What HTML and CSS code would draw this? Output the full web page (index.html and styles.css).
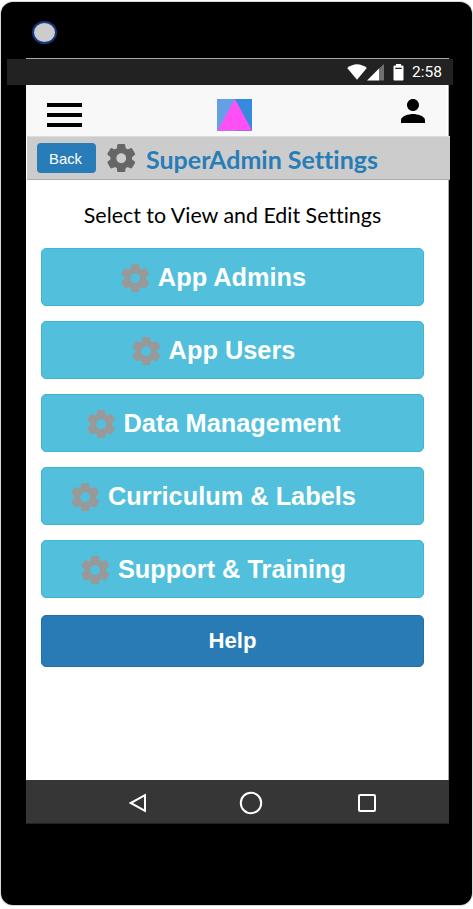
FILE: index.html
```html
<!DOCTYPE html>
<html lang="en">
<head>
<meta charset="utf-8">
<title>SuperAdmin Settings</title>
<link rel="stylesheet" href="styles.css">
</head>
<body>
<svg class="defs" width="0" height="0" aria-hidden="true">
  <symbol id="gear" viewBox="1.6 1.6 20.8 20.8"><path stroke-width=".8" stroke-linejoin="round" d="M19.43 12.98c.04-.32.07-.64.07-.98s-.03-.66-.07-.98l2.11-1.65c.19-.15.24-.42.12-.64l-2-3.46c-.12-.22-.39-.3-.61-.22l-2.49 1c-.52-.4-1.08-.73-1.69-.98l-.38-2.65C14.46 2.18 14.25 2 14 2h-4c-.25 0-.46.18-.49.42l-.38 2.65c-.61.25-1.17.59-1.69.98l-2.49-1c-.23-.09-.49 0-.61.22l-2 3.46c-.13.22-.07.49.12.64l2.11 1.65c-.04.32-.07.65-.07.98s.03.66.07.98l-2.11 1.65c-.19.15-.24.42-.12.64l2 3.46c.12.22.39.3.61.22l2.49-1c.52.4 1.08.73 1.69.98l.38 2.65c.03.24.24.42.49.42h4c.25 0 .46-.18.49-.42l.38-2.65c.61-.25 1.17-.59 1.69-.98l2.49 1c.23.09.49 0 .61-.22l2-3.46c.12-.22.07-.49-.12-.64l-2.11-1.65zM12 16a4 4 0 0 1 0-8a4 4 0 0 1 0 8z"/></symbol>
</svg>
<div class="device">
  <div class="bezel-top"><span class="camera"></span></div>
  <div class="status">
    <svg class="wifi" viewBox="0 0 20 16"><path d="M0.200 4Q10-3.500 19.800 4L10 15.800Z" fill="#fff"/></svg>
    <svg class="signal" viewBox="0 0 17 17"><path d="M0 16.500L12 4.500V16.500Z" fill="#fff"/><path d="M12 4.500L17 0V16.500H12Z" fill="#707070"/></svg>
    <svg class="battery" viewBox="0 0 11 17"><path d="M3 0H8V1.500H9.500Q10.500 1.500 10.500 2.500V15.500Q10.500 16.500 9.500 16.500H1.500Q.5 16.500 .5 15.500V2.500Q.5 1.500 1.500 1.500H3Z" fill="#fff"/><path d="M2.300 3.700H8.700V4.900H2.300Z" fill="#222"/></svg>
    <span class="clock">2:58</span>
  </div>
  <main class="screen">
    <header class="appbar">
      <div class="menu"><span></span><span></span><span></span></div>
      <svg class="logo" viewBox="0 0 35 32"><path d="M0 0H18V32H0Z" fill="#65a0e4"/><path d="M18 0H35V32H18Z" fill="#358ade"/><path d="M.5 31.500L18 0L35 31.500Z" fill="#ff50f5"/></svg>
      <svg class="person" viewBox="4 4 16 16"><path d="M12 12c2.210 0 4-1.790 4-4s-1.790-4-4-4-4 1.790-4 4 1.790 4 4 4zm0 2c-2.670 0-8 1.340-8 4v2h16v-2c0-2.660-5.330-4-8-4z"/></svg>
    </header>
    <div class="titlebar">
      <button class="back">Back</button>
      <svg class="gear dark"><use href="#gear"/></svg>
      <h1>SuperAdmin Settings</h1>
    </div>
    <p class="intro">Select to View and Edit Settings</p>
    <nav class="list">
      <button class="item"><svg class="gear"><use href="#gear"/></svg><span>App Admins</span></button>
      <button class="item"><svg class="gear"><use href="#gear"/></svg><span>App Users</span></button>
      <button class="item"><svg class="gear"><use href="#gear"/></svg><span>Data Management</span></button>
      <button class="item"><svg class="gear"><use href="#gear"/></svg><span>Curriculum &amp; Labels</span></button>
      <button class="item"><svg class="gear"><use href="#gear"/></svg><span>Support &amp; Training</span></button>
      <button class="help">Help</button>
    </nav>
  </main>
  <footer class="softkeys">
    <svg class="key-back" viewBox="0 0 18 20"><path d="M16 2.200V17.800L1.700 10Z"/></svg>
    <svg class="key-home" viewBox="0 0 24 24"><circle cx="12" cy="12" r="10.200"/></svg>
    <svg class="key-recent" viewBox="0 0 18 18"><rect x="1" y="1" width="16" height="16" rx="1"/></svg>
  </footer>
</div>
</body>
</html>
```
FILE: styles.css
```css
* { box-sizing: border-box; }
body { margin: 0; width: 473px; height: 909px; background: #fff; overflow: hidden; font-family: "Liberation Sans", Arial, sans-serif; }
.defs { display: block; height: 0; }
button { margin: 0; padding: 0; font-family: inherit; color: #fff; }
svg { display: block; flex: none; }
.device { width: 471px; height: 903px; margin: 2px 0 0 1px; background: #000; border-radius: 12px; overflow: hidden; box-shadow: 0 0 0 1px #d4d8d6; display: flex; flex-direction: column; }
.bezel-top { height: 57px; flex: none; padding: 19px 0 0 31px; }
.camera { display: block; width: 25px; height: 23px; border: 2px solid #17387f; border-radius: 50%; background: #ccc; }
.bezel-top::after { content: ""; display: block; width: 423px; height: 1px; margin: 14px 0 0 -6px; background: #aaa; }
.status { height: 26px; flex: none; width: 446px; margin-left: 6px; background: #222; display: flex; align-items: center; padding-left: 339.500px; }
.wifi { width: 20px; height: 16px; }
.signal { width: 17px; height: 17px; margin-left: 0.500px; }
.battery { width: 11px; height: 17px; margin-left: 8.500px; }
.clock { margin-left: 8.500px; font: 400 15.500px/26px Roboto, sans-serif; color: #fff; }
.screen { width: 424px; height: 695px; flex: none; margin-left: 25px; background: linear-gradient(#fff, #fff) 0 0 / 422px 100% no-repeat, linear-gradient(#aaa, #aaa) 422px 0 / 1px 100% no-repeat; }
.appbar { width: 420px; height: 51px; background: #f8f8f8; display: flex; align-items: flex-start; padding: 14px 0 0 21px; }
.menu { width: 35px; height: 24px; margin-top: 4px; display: flex; flex-direction: column; justify-content: space-between; }
.menu span { height: 4px; background: #000; }
.logo { width: 35px; height: 32px; margin-left: 135px; }
.person { width: 24px; height: 24px; margin-left: 148.500px; }
.titlebar { width: 423px; height: 44px; margin-left: 1px; background: #ccc; border-top: 1px solid #ddd; border-bottom: 1px solid #aaa; display: flex; align-items: center; padding-left: 10px; }
.back { width: 59px; height: 30px; border: 0; border-radius: 4px; background: #287db8; font-size: 14.800px; line-height: 32px; padding-right: 2px; }
.gear { width: 28.500px; height: 28.500px; fill: #999; stroke: #999; margin-top: 1px; }
.gear.dark { fill: #666; stroke: #666; margin: 0 0 0 11px; }
h1 { margin: 2px 0 0 10.500px; font: 700 25px/30px Lato, sans-serif; font-variant-ligatures: none; color: #287db8; white-space: nowrap; }
.intro { margin: 20px 0 18px; width: 413px; height: 30px; text-align: center; font: 400 21.400px/30px Lato, sans-serif; font-variant-ligatures: none; color: #000; white-space: nowrap; }
.list { margin-left: 15px; width: 383px; display: flex; flex-direction: column; gap: 15.500px; }
.item { height: 57.500px; display: flex; align-items: center; justify-content: center; gap: 8.500px; padding: 1px 38px 0 0; background: #52c0dc; border: 1px solid #3fb4d3; border-radius: 5px; font-size: 25.350px; font-weight: 700; line-height: 30px; white-space: nowrap; }
.help { height: 52px; margin-top: 2px; background: #287bb5; border: 1px solid #2370a9; border-radius: 5px; font-size: 22.200px; font-weight: 700; }
.softkeys { width: 423px; height: 44px; flex: none; margin-left: 25px; background: #363636; border-bottom: 1px solid #222; display: flex; align-items: center; padding: 2px 0 0 103px; }
.softkeys svg { fill: none; stroke: #fff; stroke-width: 2; }
.key-back { width: 18px; height: 20px; }
.key-home { width: 24px; height: 24px; margin-left: 92px; }
.key-recent { width: 18px; height: 18px; margin-left: 95px; }
```
